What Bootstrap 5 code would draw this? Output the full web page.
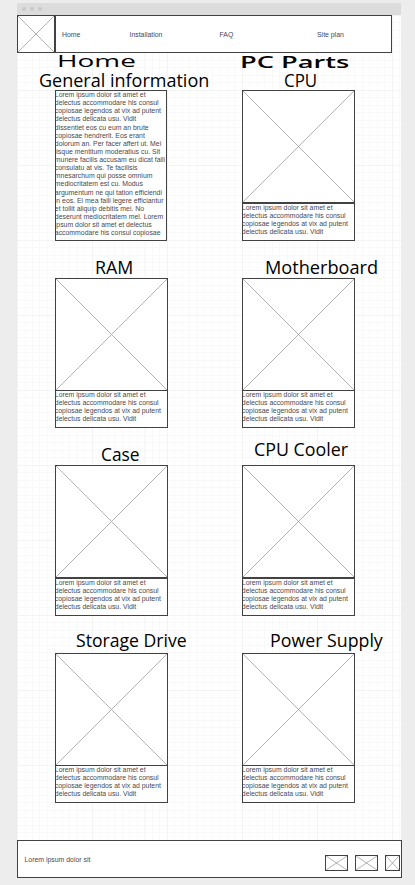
<!DOCTYPE html>
<html lang="en">
<head>
<meta charset="utf-8">
<meta name="viewport" content="width=device-width, initial-scale=1">
<title>PC Parts wireframe</title>
<link rel="stylesheet" href="https://cdn.jsdelivr.net/npm/bootstrap@5.3.0/dist/css/bootstrap.min.css">
<style>
  body { background: #ededed; font-family: "Liberation Sans", Arial, sans-serif; font-size: 6.9px; line-height: 8.12px; color: #484850; padding: 3px 0 0 17px; height: 885px; overflow: hidden; }
  .sheet { width: 384px; }
  .chrome { height: 12px; background: #dcdcdc; border-radius: 1px 1px 0 0; padding-left: 5px; gap: 4px; }
  .chrome i { width: 4px; height: 4px; border-radius: 50%; background: #c9c9c9; }
  .canvas {
    height: 862px;
    background-color: #fff;
    background-image:
      repeating-linear-gradient(90deg, #f3f3f3 0 1px, transparent 1px 75px),
      repeating-linear-gradient(180deg, #f3f3f3 0 1px, transparent 1px 75px),
      repeating-linear-gradient(90deg, #f9f9f9 0 1px, transparent 1px 7.5px),
      repeating-linear-gradient(180deg, #f9f9f9 0 1px, transparent 1px 7.5px);
  }
  .frame { border: 1px solid #424242; background: #fff; }
  .cross { display: block; width: 100%; height: 100%; stroke: #a0a0a0; stroke-width: .8; }
  .logo-box { width: 38px; height: 38px; }
  .menu { width: 337px; height: 38px; padding-left: 6px; padding-top: 2px; }
  .menu a { color: #3f4660; text-decoration: none; }
  .w-home { width: 67.5px; } .w-inst { width: 90px; } .w-faq { width: 97.5px; }
  .parts { padding-left: 38px; column-gap: 74px; }
  .part { width: 113px; }
  .heads { height: 37px; }
  .heads h1, .heads h2 { color: #000; margin: 0; white-space: nowrap; width: max-content; transform-origin: 0 50%; transform: scaleX(var(--sx, 1)); margin-left: var(--dx, 0); font-family: "Open Sans", "Noto Sans", sans-serif; font-weight: 400; }
  .heads h2 { font-size: 18.2px; line-height: 20px; }
  .heads h1 { font-size: 16.5px; line-height: 17px; }
  .heads .t-home { font-weight: 500; line-height: 15px; margin-bottom: 2px; }
  .heads .t-parts { font-weight: 600; font-size: 17px; line-height: 17px; }
  .pic { height: 113px; }
  .blurb { height: 38px; overflow: hidden; }
  .blurb p, .long p { margin: 0 0 0 -1.2px; white-space: nowrap; }
  .snug .blurb { margin-top: -1px; }
  .long { width: 112px; height: 151px; overflow: hidden; }
  .foot { width: 385px; height: 38px; margin-top: 37px; padding: 2px 1px 0 6.5px; }
  .tiles { padding-top: 5px; }
  .icon-wide { width: 23px; height: 16px; margin-right: 7px; }
  .icon-cut { width: 15px; height: 16px; }
  .t-home { --sx: 1.69; --dx: 1.5px; }
  .t-parts { --sx: 1.6; --dx: -2.5px; }
  .t-general { --sx: .99; --dx: -16px; }
  .t-cpu { --sx: .93; --dx: 42px; }
  .t-ram { --sx: .98; --dx: 39.5px; }
  .t-mother { --sx: .998; --dx: 23px; }
  .t-case { --sx: .955; --dx: 45.5px; }
  .t-cooler { --sx: .98; --dx: 12px; }
  .t-storage { --sx: .969; --dx: 20.5px; }
  .t-power { --sx: .977; --dx: 28px; }
  .up-1 { padding-bottom: 1px; } .up-3 { padding-bottom: 3px; } .up-5 { padding-bottom: 6px; }
</style>
<script src="https://cdn.jsdelivr.net/npm/bootstrap@5.3.0/dist/js/bootstrap.bundle.min.js"></script>
</head>
<body>
<svg width="0" height="0" class="d-none"><symbol id="x" viewBox="0 0 100 100" preserveAspectRatio="none"><path d="M0 0L100 100M100 0L0 100" vector-effect="non-scaling-stroke"/></symbol></svg>
<div class="sheet">
  <div class="chrome d-flex align-items-center"><i></i><i></i><i></i></div>
  <div class="canvas">
    <header class="d-flex">
      <div class="frame logo-box"><svg class="cross"><use href="#x"/></svg></div>
      <nav class="frame menu d-flex align-items-center">
        <a href="#" class="w-home">Home</a><a href="#" class="w-inst">Installation</a><a href="#" class="w-faq">FAQ</a><a href="#">Site plan</a>
      </nav>
    </header>
    <main>
      <section class="parts d-flex">
        <div class="part">
          <div class="heads d-flex flex-column"><h1 class="t-home">Home</h1><h2 class="t-general">General information</h2></div>
          <div class="frame long"><p>Lorem ipsum dolor sit amet et<br>delectus accommodare his consul<br>copiosae legendos at vix ad putent<br>delectus delicata usu. Vidit<br>dissentiet eos cu eum an brute<br>copiosae hendrerit. Eos erant<br>dolorum an. Per facer affert ut. Mei<br>iisque mentitum moderatius cu. Sit<br>munere facilis accusam eu dicat falli<br>consulatu at vis. Te facilisis<br>mnesarchum qui posse omnium<br>mediocritatem est cu. Modus<br>argumentum ne qui tation efficiendi<br>in eos. Ei mea falli legere efficiantur<br>et tollit aliquip debitis mei. No<br>deserunt mediocritatem mel. Lorem<br>ipsum dolor sit amet et delectus<br>accommodare his consul copiosae</p></div>
        </div>
        <div class="part">
          <div class="heads d-flex flex-column"><h1 class="t-parts">PC Parts</h1><h2 class="t-cpu">CPU</h2></div>
          <div class="frame pic"><svg class="cross"><use href="#x"/></svg></div>
          <div class="frame blurb"><p>Lorem ipsum dolor sit amet et<br>delectus accommodare his consul<br>copiosae legendos at vix ad putent<br>delectus delicata usu. Vidit</p></div>
        </div>
      </section>
      <section class="parts d-flex snug">
        <div class="part">
          <div class="heads d-flex flex-column justify-content-end up-1"><h2 class="t-ram">RAM</h2></div>
          <div class="frame pic"><svg class="cross"><use href="#x"/></svg></div>
          <div class="frame blurb"><p>Lorem ipsum dolor sit amet et<br>delectus accommodare his consul<br>copiosae legendos at vix ad putent<br>delectus delicata usu. Vidit</p></div>
        </div>
        <div class="part">
          <div class="heads d-flex flex-column justify-content-end up-1"><h2 class="t-mother">Motherboard</h2></div>
          <div class="frame pic"><svg class="cross"><use href="#x"/></svg></div>
          <div class="frame blurb"><p>Lorem ipsum dolor sit amet et<br>delectus accommodare his consul<br>copiosae legendos at vix ad putent<br>delectus delicata usu. Vidit</p></div>
        </div>
      </section>
      <section class="parts d-flex">
        <div class="part">
          <div class="heads d-flex flex-column justify-content-end up-1"><h2 class="t-case">Case</h2></div>
          <div class="frame pic"><svg class="cross"><use href="#x"/></svg></div>
          <div class="frame blurb"><p>Lorem ipsum dolor sit amet et<br>delectus accommodare his consul<br>copiosae legendos at vix ad putent<br>delectus delicata usu. Vidit</p></div>
        </div>
        <div class="part">
          <div class="heads d-flex flex-column justify-content-end up-5"><h2 class="t-cooler">CPU Cooler</h2></div>
          <div class="frame pic"><svg class="cross"><use href="#x"/></svg></div>
          <div class="frame blurb"><p>Lorem ipsum dolor sit amet et<br>delectus accommodare his consul<br>copiosae legendos at vix ad putent<br>delectus delicata usu. Vidit</p></div>
        </div>
      </section>
      <section class="parts d-flex snug">
        <div class="part">
          <div class="heads d-flex flex-column justify-content-end up-3"><h2 class="t-storage">Storage Drive</h2></div>
          <div class="frame pic"><svg class="cross"><use href="#x"/></svg></div>
          <div class="frame blurb"><p>Lorem ipsum dolor sit amet et<br>delectus accommodare his consul<br>copiosae legendos at vix ad putent<br>delectus delicata usu. Vidit</p></div>
        </div>
        <div class="part">
          <div class="heads d-flex flex-column justify-content-end up-3"><h2 class="t-power">Power Supply</h2></div>
          <div class="frame pic"><svg class="cross"><use href="#x"/></svg></div>
          <div class="frame blurb"><p>Lorem ipsum dolor sit amet et<br>delectus accommodare his consul<br>copiosae legendos at vix ad putent<br>delectus delicata usu. Vidit</p></div>
        </div>
      </section>
    </main>
    <footer class="frame foot d-flex align-items-center">
      <span class="me-auto">Lorem ipsum dolor sit</span>
      <div class="d-flex tiles">
        <div class="frame icon-wide"><svg class="cross"><use href="#x"/></svg></div>
        <div class="frame icon-wide"><svg class="cross"><use href="#x"/></svg></div>
        <div class="frame icon-cut"><svg class="cross"><use href="#x"/></svg></div>
      </div>
    </footer>
  </div>
</div>
</body>
</html>
